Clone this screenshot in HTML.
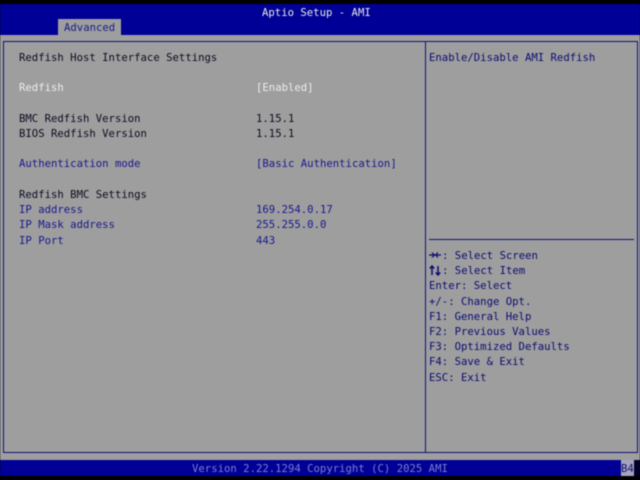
<!DOCTYPE html>
<html><head><meta charset="utf-8">
<style>
html,body{margin:0;padding:0;background:#000}
#s{position:relative;width:640px;height:480px;background:#000;overflow:hidden;font-family:"DejaVu Sans Mono","Liberation Mono",monospace;font-size:10.63px;line-height:15px;filter:blur(0.4px)}
#s div{position:absolute}
.t{white-space:pre;color:#0c0c20}
.b{white-space:pre;color:#18188e}
.w{white-space:pre;color:#ececec}
.n{white-space:pre;color:#0c0c72}
.l{background:#10107c}
</style></head><body>
<div id="s">
<div style="left:0;top:4px;width:640px;height:31px;background:#000096"></div>
<div style="left:0;top:35px;width:640px;height:425px;background:#9e9e9e"></div>
<div style="left:0;top:460px;width:640px;height:16px;background:#000096"></div>

<div style="left:58px;top:19px;width:63px;height:16px;background:#9e9e9e"></div>
<div class="b" style="left:64px;top:20px;color:#1a1a88">Advanced</div>
<div style="left:262px;top:4px;line-height:17px;color:#e8e8e8;white-space:pre">Aptio Setup - AMI</div>

<div class="l" style="left:3px;top:41px;width:635px;height:1px"></div>
<div class="l" style="left:3px;top:452px;width:635px;height:1px"></div>
<div class="l" style="left:3px;top:41px;width:1px;height:412px"></div>
<div class="l" style="left:425px;top:41px;width:1px;height:412px"></div>
<div class="l" style="left:637px;top:41px;width:1px;height:412px"></div>
<div class="l" style="left:429px;top:239px;width:205px;height:1px"></div>

<div class="t" style="left:19px;top:50px">Redfish Host Interface Settings</div>
<div class="w" style="left:19px;top:80px">Redfish</div>
<div class="w" style="left:256px;top:80px">[Enabled]</div>
<div class="t" style="left:19px;top:111px">BMC Redfish Version</div>
<div class="t" style="left:256px;top:111px">1.15.1</div>
<div class="t" style="left:19px;top:126px">BIOS Redfish Version</div>
<div class="t" style="left:256px;top:126px">1.15.1</div>
<div class="b" style="left:19px;top:156px">Authentication mode</div>
<div class="b" style="left:256px;top:156px">[Basic Authentication]</div>
<div class="t" style="left:19px;top:187px">Redfish BMC Settings</div>
<div class="b" style="left:19px;top:202px">IP address</div>
<div class="b" style="left:256px;top:202px">169.254.0.17</div>
<div class="b" style="left:19px;top:217px">IP Mask address</div>
<div class="b" style="left:256px;top:217px">255.255.0.0</div>
<div class="b" style="left:19px;top:233px">IP Port</div>
<div class="b" style="left:256px;top:233px">443</div>

<div class="n" style="left:429px;top:50px">Enable/Disable AMI Redfish</div>

<svg style="position:absolute;left:429px;top:249px" width="13" height="28" viewBox="0 0 13 28" fill="none" stroke="#0c0c72" stroke-width="1.2">
<path d="M0 6H5M3 3.5L5.5 6L3 8.5M12 6H7M9 3.5L6.5 6L9 8.5"/>
<path stroke-width="1.5" d="M3 26V17M0.8 19.5L3 17L5.2 19.5M9 17V26M6.8 23.5L9 26L11.2 23.5"/>
</svg>
<div class="n" style="left:442px;top:248px">: Select Screen</div>
<div class="n" style="left:442px;top:263px">: Select Item</div>
<div class="n" style="left:429px;top:278px">Enter: Select</div>
<div class="n" style="left:429px;top:294px">+/-: Change Opt.</div>
<div class="n" style="left:429px;top:309px">F1: General Help</div>
<div class="n" style="left:429px;top:324px">F2: Previous Values</div>
<div class="n" style="left:429px;top:339px">F3: Optimized Defaults</div>
<div class="n" style="left:429px;top:354px">F4: Save &amp; Exit</div>
<div class="n" style="left:429px;top:370px">ESC: Exit</div>

<div style="left:192px;top:461px;color:#7c7cd0;white-space:pre">Version 2.22.1294 Copyright (C) 2025 AMI</div>
<div style="left:621px;top:460px;width:13px;height:16px;background:#a4a4c0"></div>
<div style="left:634px;top:460px;width:6px;height:16px;background:#000028"></div>
<div style="left:621px;top:461px;color:#10106a;white-space:pre">B4</div>
</div>
</body></html>
